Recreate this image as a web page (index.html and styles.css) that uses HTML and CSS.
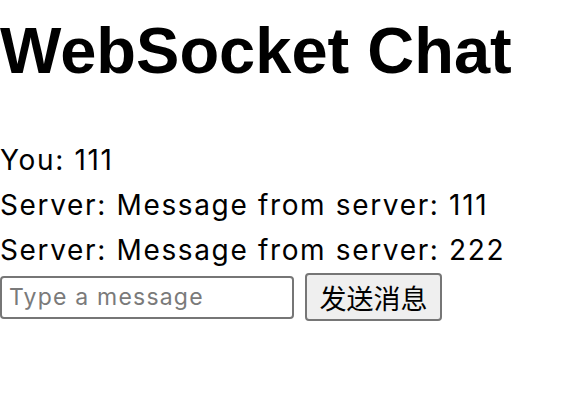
FILE: index.html
```html
<!DOCTYPE html>
<html>
<head>
<meta charset="utf-8">
<link rel="stylesheet" href="styles.css">
</head>
<body>
<h1 class="title">WebSocket Chat</h1>
<div class="messages">
  <div class="msg">You: 111</div>
  <div class="msg">Server: Message from server: 111</div>
  <div class="msg">Server: Message from server: 222</div>
</div>
<div class="composer">
  <input class="field" type="text" placeholder="Type a message">
  <button class="send">发送消息</button>
</div>
</body>
</html>
```
FILE: styles.css
```css
body {
  margin: 0;
  font-family: "Liberation Sans", Arial, "Noto Sans CJK SC", sans-serif;
  color: #000;
  background: #fff;
}
.title {
  margin: 13px 0 50px;
  font-size: 65px;
  font-weight: bold;
  line-height: normal;
}
.messages {
  font-family: Inter, "Liberation Sans", sans-serif;
  font-size: 28px;
  line-height: 45px;
  letter-spacing: 1.65px;
}
.composer {
  display: flex;
  align-items: center;
  gap: 11px;
  height: 48px;
}
.field {
  box-sizing: border-box;
  width: 294px;
  height: 43px;
  margin: 0;
  padding: 0 7px;
  border: 2px solid #767676;
  border-radius: 4px;
  font-family: Inter, "Liberation Sans", sans-serif;
  font-size: 23px;
  letter-spacing: 1.2px;
  color: #000;
  background: #fff;
}
.field::placeholder {
  color: #7a7a7a;
}
.send {
  box-sizing: border-box;
  width: 137px;
  height: 48px;
  margin: 0;
  padding: 0;
  border: 2px solid #767676;
  border-radius: 4px;
  background: #efefef;
  font-family: "Noto Sans CJK SC", sans-serif;
  font-size: 27px;
  color: #000;
}
```
